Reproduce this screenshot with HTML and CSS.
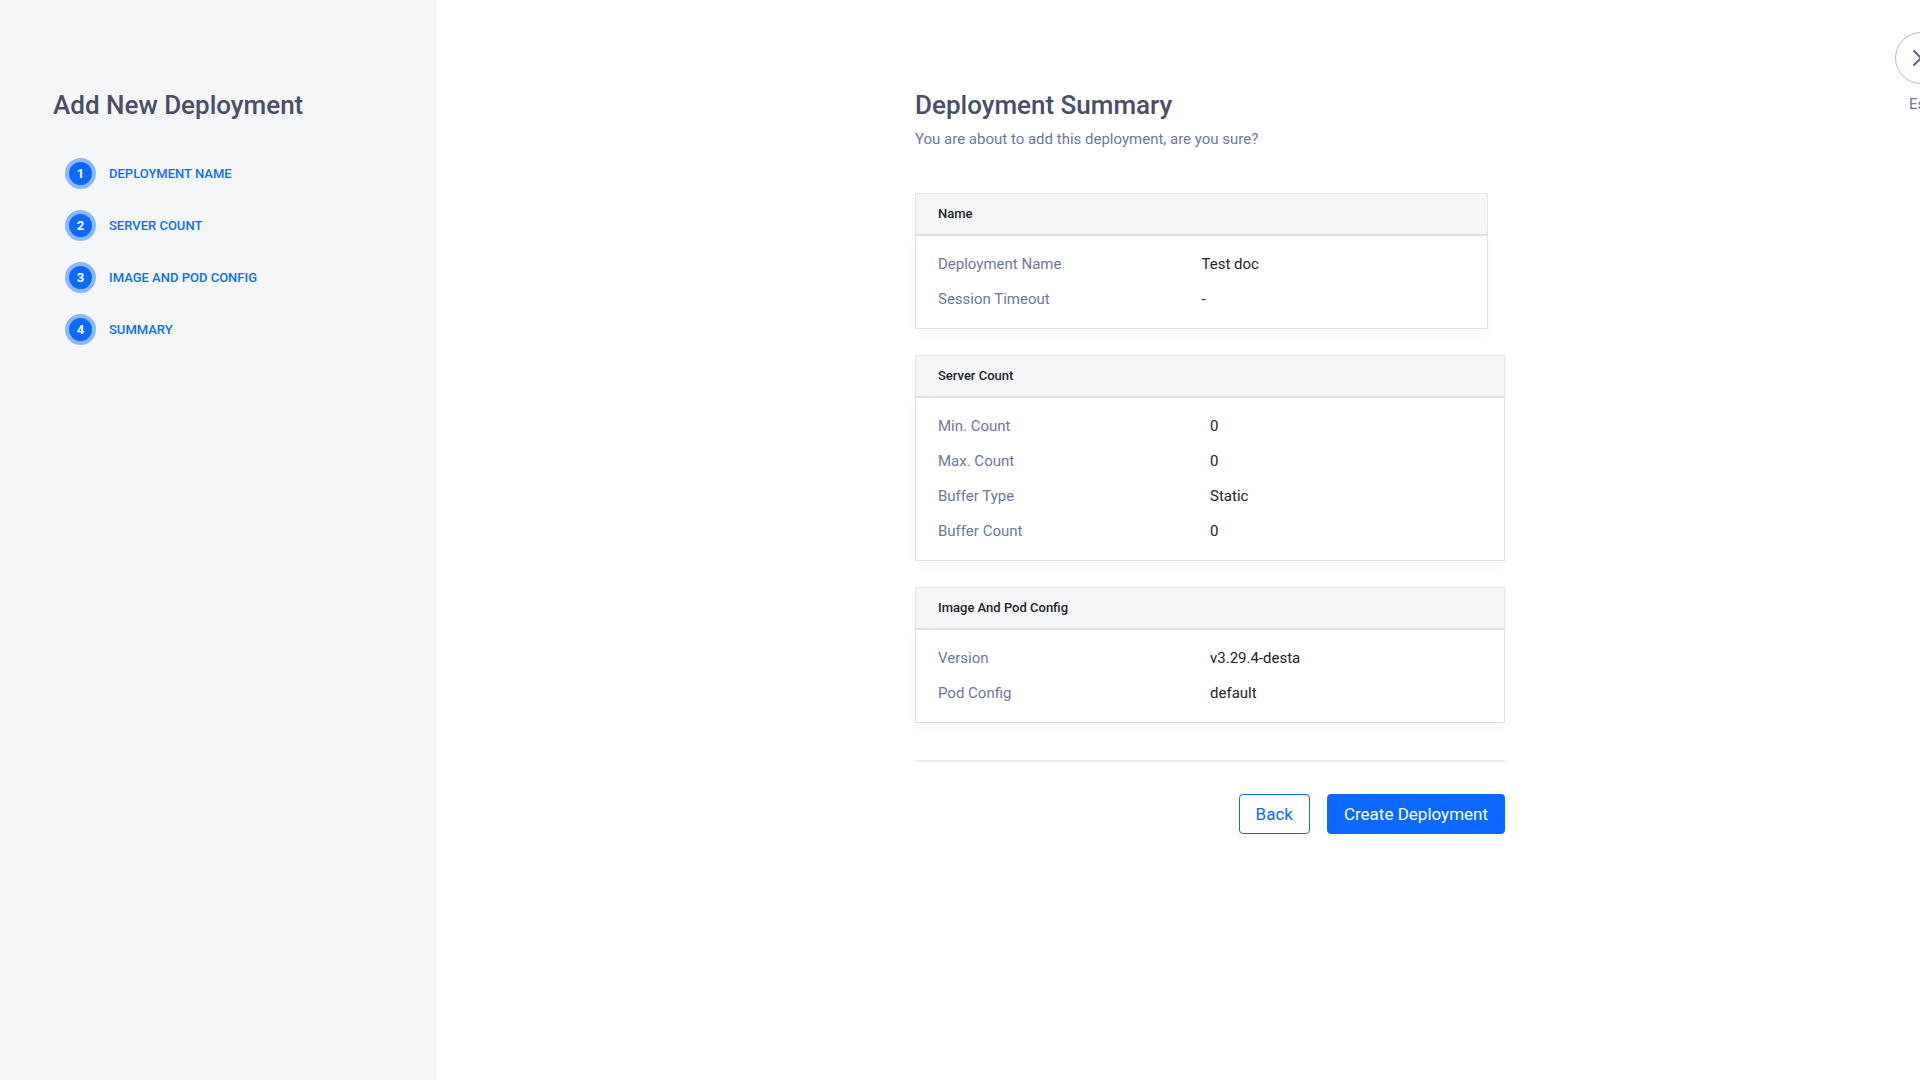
FILE: index.html
```html
<!DOCTYPE html>
<html lang="en">
<head>
<meta charset="utf-8">
<title>Add New Deployment</title>
<link rel="stylesheet" href="styles.css">
</head>
<body>
<div class="page">
  <aside class="sidebar">
    <h1 class="title">Add New Deployment</h1>
    <ol class="steps">
      <li class="step"><span class="step-number">1</span><span>DEPLOYMENT NAME</span></li>
      <li class="step"><span class="step-number">2</span><span>SERVER COUNT</span></li>
      <li class="step"><span class="step-number">3</span><span>IMAGE AND POD CONFIG</span></li>
      <li class="step"><span class="step-number">4</span><span>SUMMARY</span></li>
    </ol>
  </aside>
  <main class="main">
    <div class="panel">
      <h2 class="title">Deployment Summary</h2>
      <p class="subtitle">You are about to add this deployment, are you sure?</p>
      <div class="cards">
        <section class="card card-inset">
          <h3 class="card-header">Name</h3>
          <dl class="card-body">
            <dt>Deployment Name</dt><dd>Test doc</dd>
            <dt>Session Timeout</dt><dd>-</dd>
          </dl>
        </section>
        <section class="card">
          <h3 class="card-header">Server Count</h3>
          <dl class="card-body">
            <dt>Min. Count</dt><dd>0</dd>
            <dt>Max. Count</dt><dd>0</dd>
            <dt>Buffer Type</dt><dd>Static</dd>
            <dt>Buffer Count</dt><dd>0</dd>
          </dl>
        </section>
        <section class="card">
          <h3 class="card-header">Image And Pod Config</h3>
          <dl class="card-body">
            <dt>Version</dt><dd>v3.29.4-desta</dd>
            <dt>Pod Config</dt><dd>default</dd>
          </dl>
        </section>
      </div>
      <div class="actions">
        <button class="button" type="button">Back</button>
        <button class="button button-primary" type="button">Create Deployment</button>
      </div>
    </div>
  </main>
  <button class="close" type="button">
    <span class="close-circle">
      <svg width="18" height="18" viewBox="0 0 18 18" fill="none" stroke="#56678a" stroke-width="2" stroke-linecap="round" aria-hidden="true"><path d="M2 2l14 14M16 2L2 16"/></svg>
    </span>
    <span>Esc</span>
  </button>
</div>
</body>
</html>
```
FILE: styles.css
```css
* {
  box-sizing: border-box;
}

body {
  margin: 0;
  font-family: Roboto, "Liberation Sans", sans-serif;
  font-size: 15px;
  color: #212529;
  background: #fff;
}

h1, h2, h3, p, ol, dl, dd {
  margin: 0;
  padding: 0;
}

.page {
  position: relative;
  display: flex;
  min-height: 100vh;
  overflow: hidden;
}

.sidebar {
  flex: 0 0 437px;
  padding: 89px 53px;
  background: #f4f6f8;
}

.title {
  font-size: 26px;
  font-weight: 500;
  line-height: 32px;
  color: #465066;
}

.steps {
  display: grid;
  gap: 21px;
  padding: 37px 12px;
  list-style: none;
}

.step {
  display: flex;
  align-items: center;
  gap: 13px;
  font-size: 13px;
  font-weight: 500;
  color: #0d6efd;
}

.step-number {
  display: grid;
  place-items: center;
  width: 31px;
  height: 31px;
  border: 4px solid #8bb8ff;
  border-radius: 50%;
  background: #0b69ff;
  color: #fff;
  font-weight: 700;
}

.main {
  flex: 1;
  display: flex;
  justify-content: center;
  padding: 89px 0 89px 63px;
}

.panel {
  flex: 0 1 590px;
}

.subtitle {
  padding-top: 7px;
  line-height: 22px;
  color: #6b7a99;
}

.cards {
  display: grid;
  gap: 26px;
  padding: 43px 0 37px;
}

.card {
  border: 1px solid #e3e5eb;
}

.card-inset {
  margin-right: 17px;
}

.card-header {
  padding: 0 22px;
  border-bottom: 1px solid #dee0e8;
  background: #f4f6f8;
  font-size: 13px;
  font-weight: 500;
  line-height: 40px;
}

.card-body {
  display: grid;
  grid-template-columns: 1fr 1fr;
  padding: 11px 22px;
  border-top: 1px solid #dee0e8;
  background: #fff;
  box-shadow: 0 4px 12px rgba(0, 0, 0, 0.04);
  line-height: 35px;
}

.card-body dt {
  color: #6b7a99;
}

.actions {
  display: flex;
  justify-content: flex-end;
  gap: 17px;
  padding-top: 32px;
  border-top: 2px solid #e9ebf0;
}

.button {
  height: 40px;
  padding: 0 16px;
  border: 1px solid #0b69ff;
  border-radius: 4px;
  background: #fff;
  color: #0b69ff;
  font: 400 17px Roboto, "Liberation Sans", sans-serif;
}

.button-primary {
  background: #0b69ff;
  color: #fff;
}

.close {
  position: absolute;
  top: 32px;
  right: -27px;
  display: grid;
  justify-items: center;
  gap: 11px;
  padding: 0;
  border: 0;
  background: none;
  color: #6b7a99;
  font: 400 15px Roboto, "Liberation Sans", sans-serif;
}

.close-circle {
  display: grid;
  place-items: center;
  width: 52px;
  height: 52px;
  border: 1px solid #b4bbcc;
  border-radius: 50%;
}
```
